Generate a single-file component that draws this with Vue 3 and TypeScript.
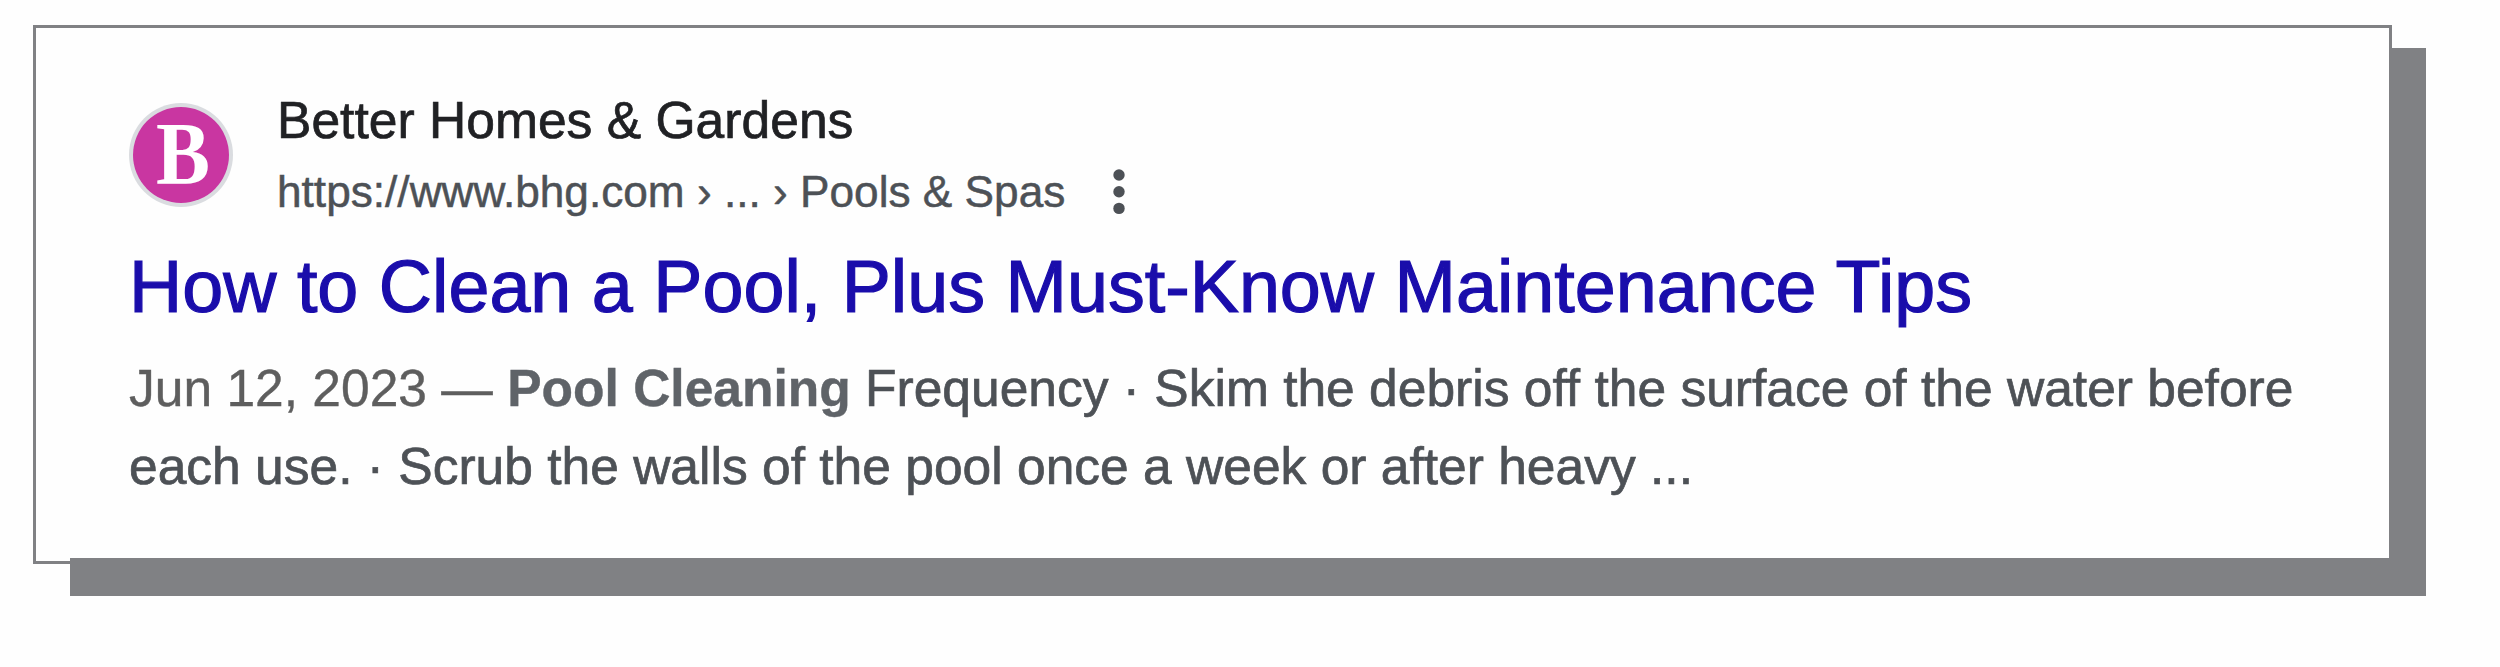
<script setup lang="ts">
const result = {
  site: 'Better Homes & Gardens',
  url: 'https://www.bhg.com › ... › Pools & Spas',
  title: 'How to Clean a Pool, Plus Must-Know Maintenance Tips',
  date: 'Jun 12, 2023 —',
  highlight: 'Pool Cleaning',
  first: 'Frequency · Skim the debris off the surface of the water before',
  second: 'each use. · Scrub the walls of the pool once a week or after heavy ...',
}
const dots: number[] = [6, 22.7, 39.4]
</script>

<template>
  <main class="page">
    <article class="card">
      <header class="source">
        <svg class="favicon" viewBox="0 0 104 104" aria-hidden="true">
          <circle cx="52" cy="52" r="52" fill="#dadce0" />
          <circle cx="52" cy="52" r="48" fill="#c936a1" />
          <text x="54" y="80" text-anchor="middle" class="favicon-letter" textLength="54" lengthAdjust="spacingAndGlyphs">B</text>
        </svg>
        <div class="names">
          <div class="site">{{ result.site }}</div>
          <div class="url-row">
            <cite class="url">{{ result.url }}</cite>
            <svg class="more" viewBox="0 0 12 46" aria-label="More options">
              <circle v-for="y in dots" :key="y" cx="6" :cy="y" r="5.7" fill="#4d5156" />
            </svg>
          </div>
        </div>
      </header>
      <h3 class="title">{{ result.title }}</h3>
      <div class="snippet">
        <div class="line"><span class="date">{{ result.date }}</span> <em>{{ result.highlight }}</em> {{ result.first }}</div>
        <div class="line">{{ result.second }}</div>
      </div>
    </article>
  </main>
</template>

<style>
body {
  margin: 0;
  background: #fff;
}
</style>

<style scoped>
.page {
  box-sizing: border-box;
  width: 2500px;
  height: 667px;
  padding: 25px 0 0 33px;
  background: #fefefe;
  font-family: "Liberation Sans", Arial, sans-serif;
  overflow: hidden;
}
.card {
  position: relative;
  box-sizing: border-box;
  width: 2359px;
  height: 539px;
  padding: 62px 0 0 93px;
  border: 3px solid #808184;
  background: #fefefe;
  white-space: nowrap;
}
.card::before,
.card::after {
  content: "";
  position: absolute;
  background: #808184;
}
.card::before {
  left: 2353px;
  top: 20px;
  width: 37px;
  height: 548px;
}
.card::after {
  left: 34px;
  top: 530px;
  width: 2356px;
  height: 38px;
}
.source {
  display: flex;
  align-items: flex-start;
}
.favicon {
  width: 104px;
  height: 104px;
  margin-top: 13px;
}
.favicon-letter {
  font: bold 88px "Liberation Serif", serif;
  fill: #fff;
}
.names {
  margin-left: 44px;
}
.site {
  font-size: 51.6px;
  line-height: 60px;
  color: #202124;
  -webkit-text-stroke: 0.7px currentColor;
}
.url-row {
  display: flex;
  align-items: center;
  height: 60px;
  margin-top: 12px;
}
.url {
  font-size: 44.2px;
  font-style: normal;
  line-height: 60px;
  color: #4d5156;
  -webkit-text-stroke: 0.5px currentColor;
}
.more {
  width: 12px;
  height: 46px;
  margin-left: 48px;
}
.title {
  margin: 20px 0 0;
  font-size: 73.7px;
  font-weight: 400;
  line-height: 90px;
  color: #1a0dab;
  -webkit-text-stroke: 1.2px currentColor;
}
.snippet {
  margin-top: 17px;
  font-size: 51.54px;
  line-height: 78px;
  color: #4d5156;
  -webkit-text-stroke: 0.7px currentColor;
}
.date {
  color: #5e5e5e;
  -webkit-text-stroke: 0.4px currentColor;
}
em {
  font-style: normal;
  font-weight: 700;
  color: #5f6368;
  -webkit-text-stroke: 0.4px currentColor;
}
</style>
